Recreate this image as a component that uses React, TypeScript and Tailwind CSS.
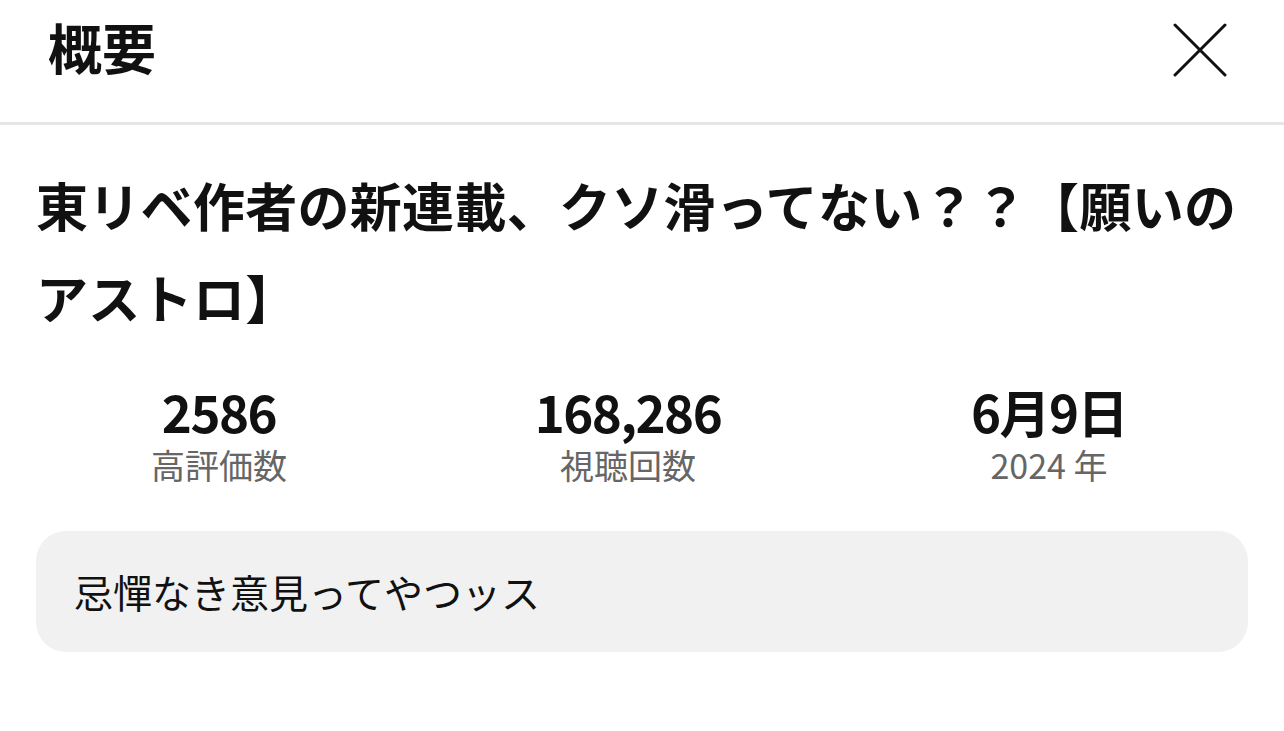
import { useState } from "react";

const stats = [
  { value: "2586", label: "高評価数" },
  { value: "168,286", label: "視聴回数" },
  { value: "6月9日", label: "2024 年" },
];

export default function App() {
  const [open, setOpen] = useState(true);

  return (
    <div
      className="w-[1284px] h-[731px] bg-white text-[#111] overflow-hidden"
      style={{ fontFamily: '"Noto Sans CJK JP", "Noto Sans", sans-serif' }}
    >
      <div className="h-[125px] flex items-start justify-between pl-[48px] pr-[57px] border-b-[3px] border-[#e6e6e6]">
        <h1 className="mt-[20px] text-[54px] font-bold leading-none">概要</h1>
        <button className="mt-[23px]" onClick={() => setOpen(!open)} aria-label="close">
          <svg width="54" height="54" viewBox="0 0 54 54" fill="none">
            <path d="M2 2L52 52M52 2L2 52" stroke="#111" strokeWidth="3" strokeLinecap="round" />
          </svg>
        </button>
      </div>

      <div className="px-9">
        <h2 className="mt-[34px] text-[52px] font-bold leading-[92px] tracking-[0.3px]">
          東リベ作者の新連載、クソ滑ってない？？【願いの
          <br />
          アストロ】
        </h2>

        <div className="mt-[37px] grid grid-cols-[438px_380px_462px] -ml-9">
          {stats.map((s) => (
            <div key={s.label} className="flex flex-col items-center">
              <span className="text-[51px] font-bold leading-[62px] tracking-[-1.5px]">{s.value}</span>
              <span className="text-[34px] leading-[46px] text-[#666]">{s.label}</span>
            </div>
          ))}
        </div>

        <div className="mt-[43px] h-[121px] rounded-[30px] bg-[#f1f1f1] flex items-center px-[38px]">
          <p className="text-[39px] leading-none">忌憚なき意見ってやつッス</p>
        </div>
      </div>
    </div>
  );
}
